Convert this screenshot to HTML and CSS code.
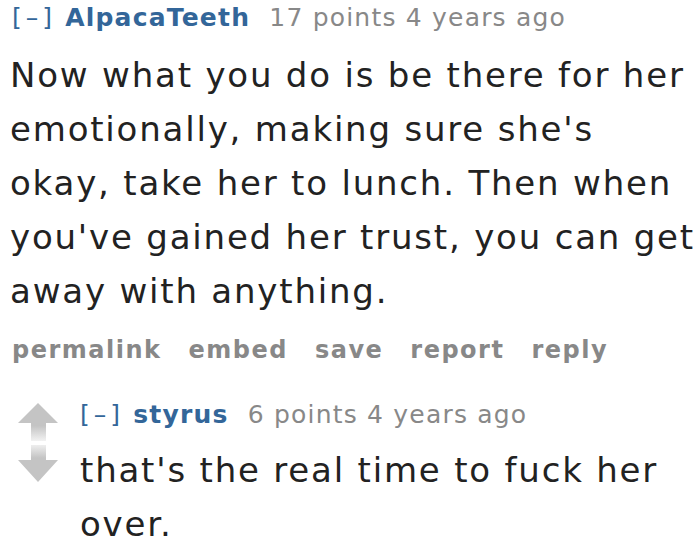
FILE: index.html
```html
<!DOCTYPE html>
<html>
<head>
<meta charset="utf-8">
<link rel="stylesheet" href="styles.css">
</head>
<body>
<div class="comment">
  <div class="tagline"><span class="expand">[–]</span> <span class="author">AlpacaTeeth</span> <span class="score">17 points</span> <span class="time">4 years ago</span></div>
  <div class="md">Now what you do is be there for her emotionally, making sure she's okay, take her to lunch. Then when you've gained her trust, you can get away with anything.</div>
  <ul class="buttons">
    <li>permalink</li><li>embed</li><li>save</li><li>report</li><li>reply</li>
  </ul>
  <div class="child">
    <div class="midcol">
      <svg width="44" height="84" viewBox="0 0 44 84">
        <defs>
          <linearGradient id="up" x1="0" y1="0" x2="0" y2="1">
            <stop offset="0" stop-color="#c4c4c4"/>
            <stop offset="0.6" stop-color="#c4c4c4"/>
            <stop offset="1" stop-color="#f2f2f2"/>
          </linearGradient>
          <linearGradient id="down" x1="0" y1="0" x2="0" y2="1">
            <stop offset="0" stop-color="#eeeeee"/>
            <stop offset="0.35" stop-color="#c4c4c4"/>
            <stop offset="1" stop-color="#c4c4c4"/>
          </linearGradient>
        </defs>
        <path d="M22 2 L42 22 L30 22 L30 40 L15 40 L15 22 L2 22 Z" fill="url(#up)"/>
        <path d="M15 44 L30 44 L30 59 L42 59 L22 81 L2 59 L15 59 Z" fill="url(#down)"/>
      </svg>
    </div>
    <div class="entry">
      <div class="tagline"><span class="expand">[–]</span> <span class="author">styrus</span> <span class="score">6 points</span> <span class="time">4 years ago</span></div>
      <div class="md">that's the real time to fuck her over.</div>
    </div>
  </div>
</div>
</body>
</html>
```
FILE: styles.css
```css
html, body {
  margin: 0;
  padding: 0;
  background: #fff;
}
body {
  font-family: "DejaVu Sans", Verdana, sans-serif;
  width: 700px;
  height: 545px;
  overflow: hidden;
}
.comment {
  padding-left: 10px;
  padding-top: 2px;
  width: 696px;
}
.tagline {
  font-size: 25px;
  line-height: 32px;
  letter-spacing: 1.2px;
  color: #888;
  white-space: nowrap;
}
.expand {
  color: #369;
  margin-left: 2px;
  letter-spacing: 4px;
}
.author {
  color: #369;
  font-weight: bold;
  margin-right: 10px;
}
.md {
  font-size: 34px;
  line-height: 54px;
  letter-spacing: 1.8px;
  color: #222;
  margin-top: 14px;
}
.buttons {
  list-style: none;
  margin: 12px 0 0 2px;
  padding: 0;
  display: flex;
  gap: 27px;
  font-size: 24px;
  font-weight: bold;
  letter-spacing: 1.5px;
  color: #888;
  line-height: 40px;
}
.child {
  display: flex;
  margin-top: 29px;
}
.midcol {
  flex: 0 0 70px;
  padding-left: 6px;
  padding-top: 2px;
  box-sizing: border-box;
}
.midcol svg {
  display: block;
}
.entry {
  flex: 1 1 auto;
  min-width: 0;
}
.entry .tagline {
  margin-left: -2px;
}
.entry .md {
  margin-top: 12px;
}
```
